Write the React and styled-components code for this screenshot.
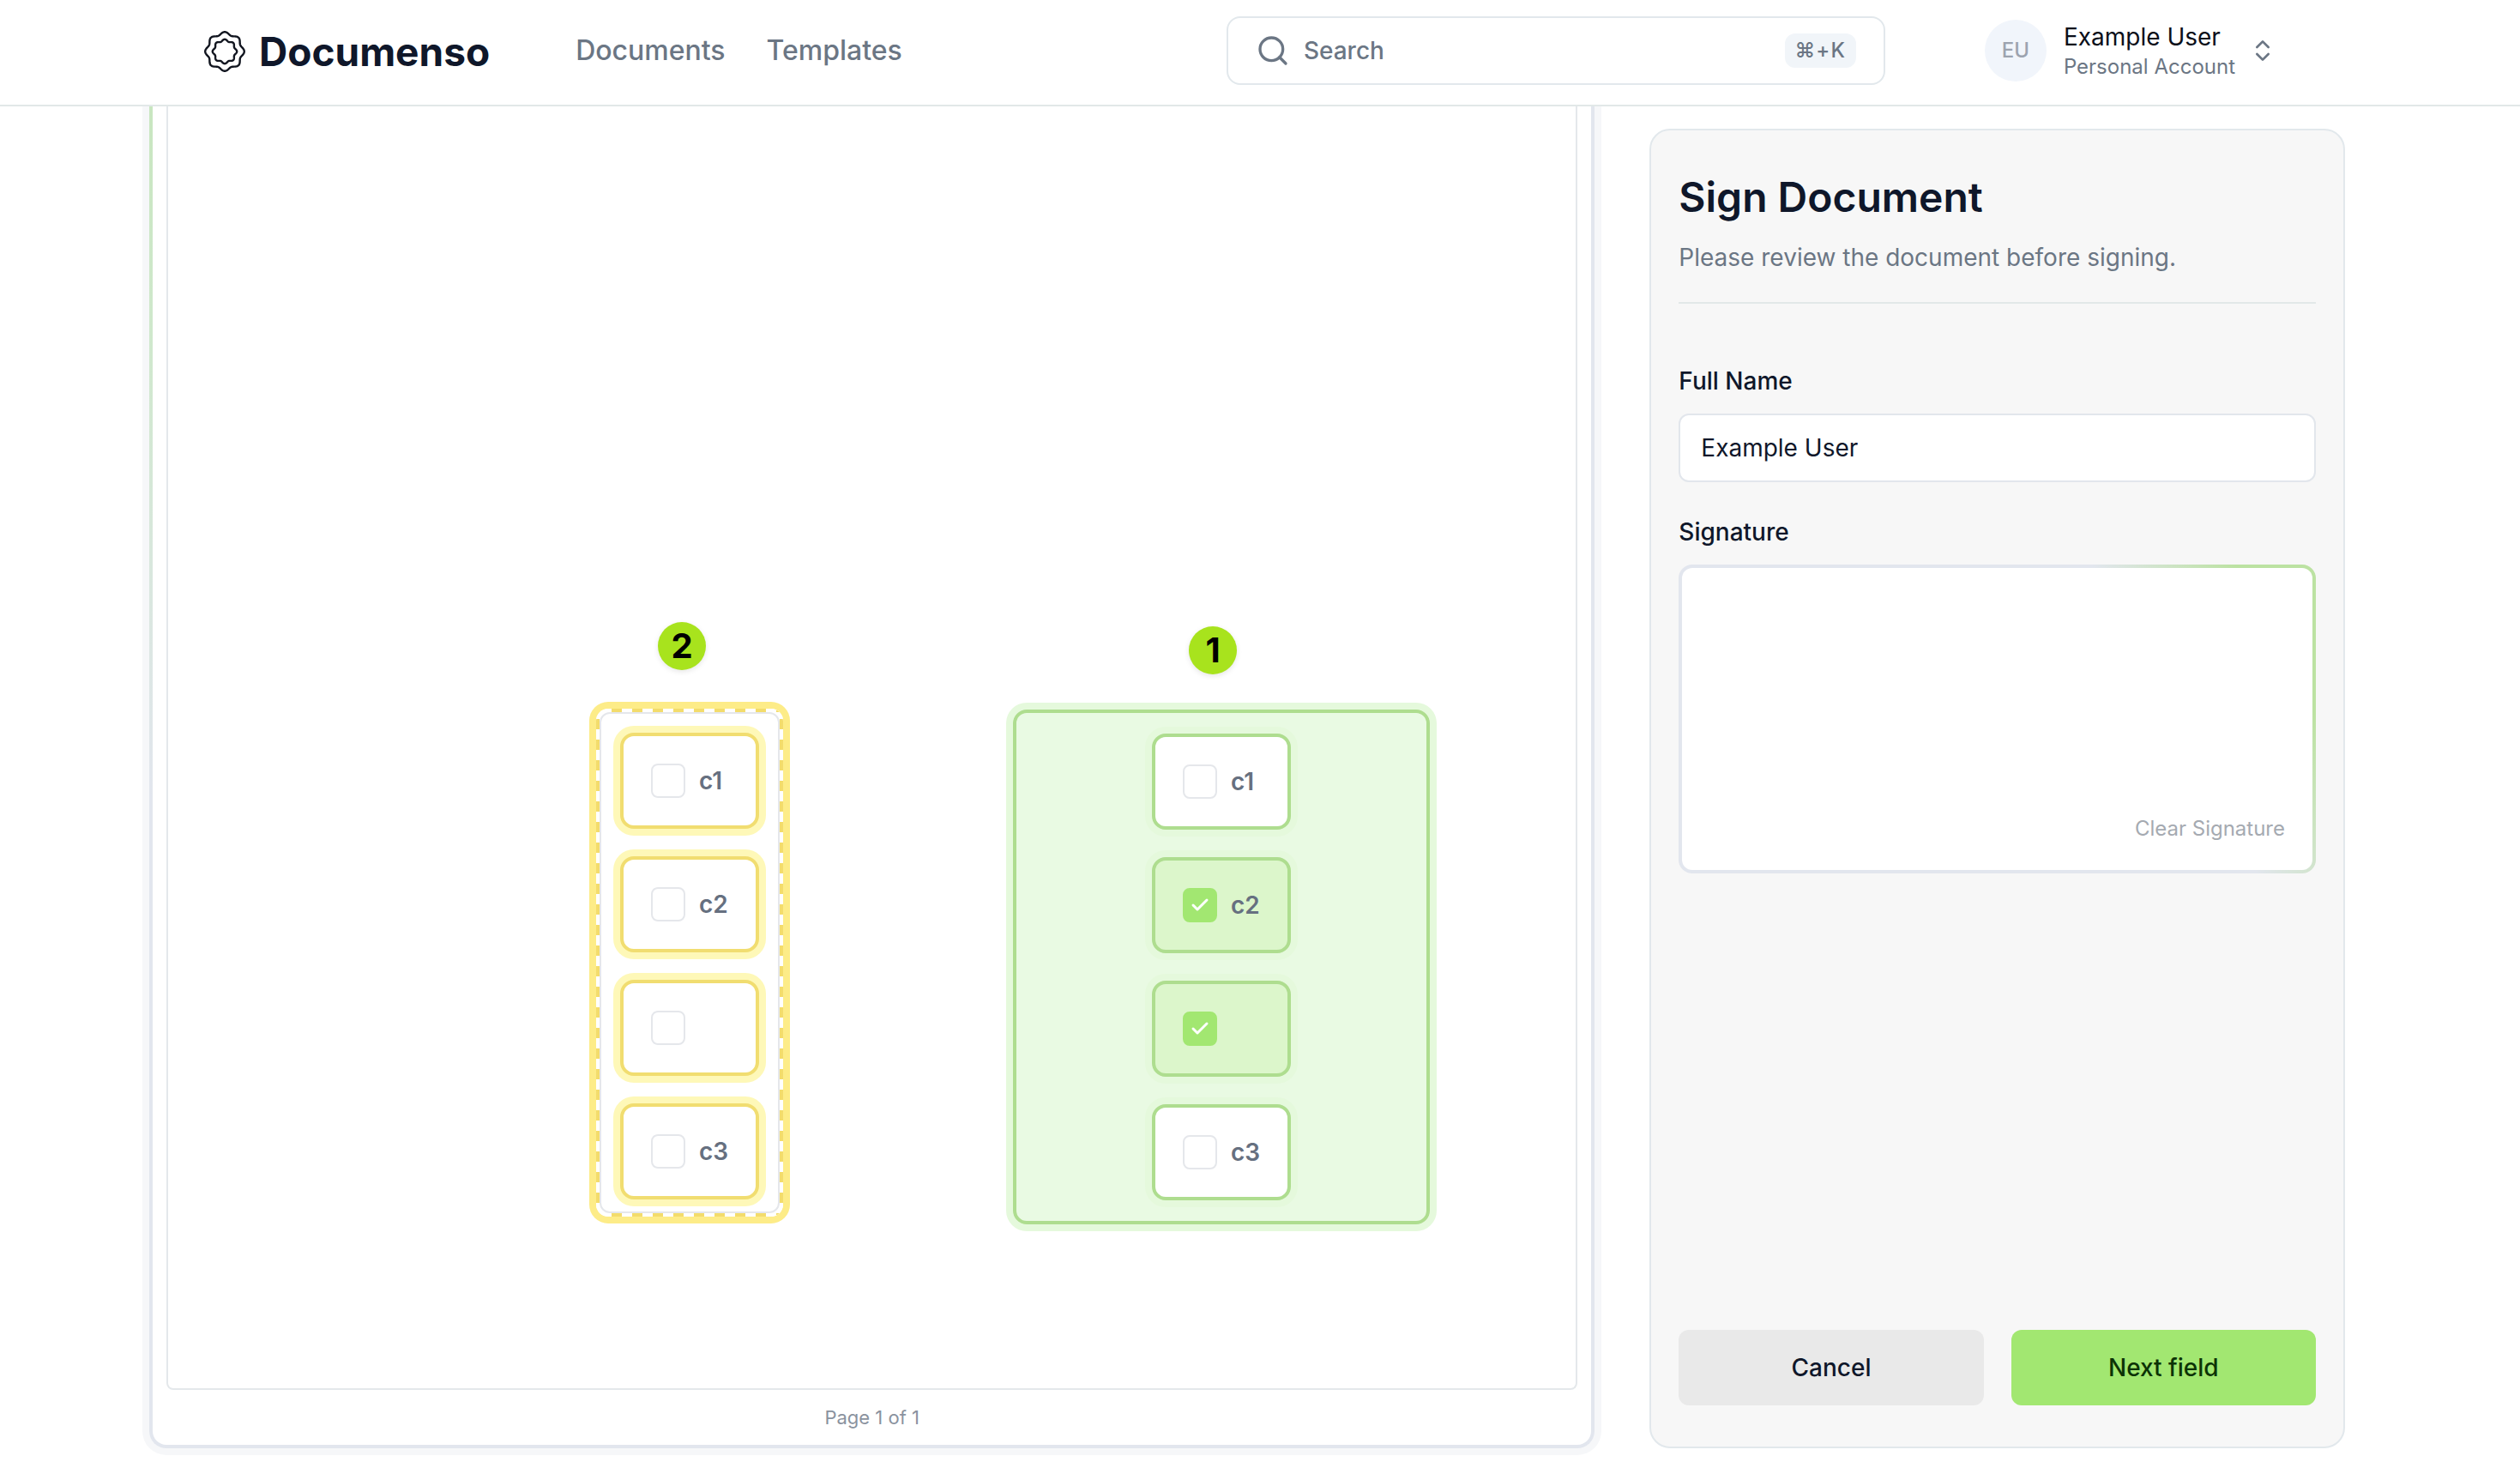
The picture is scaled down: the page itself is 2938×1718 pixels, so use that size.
import React from "react";
import styled, { createGlobalStyle } from "styled-components";
import { Check, ChevronsUpDown, Search } from "lucide-react";

const GlobalStyle = createGlobalStyle`
  *, *::before, *::after { box-sizing: border-box; }
  body {
    margin: 0;
    background: #fff;
    color: #0f172a;
    font-family: Inter, "Liberation Sans", sans-serif;
    font-size: 28px;
  }
  button, input { font: inherit; color: inherit; }
  button { cursor: pointer; }
  h1, p { margin: 0; }
`;

const Shell = styled.div`
  min-height: 100vh;
  display: flex;
  flex-direction: column;
`;

const Header = styled.header`
  position: sticky;
  top: 0;
  z-index: 10;
  height: 124px;
  padding: 0 30px 4px 0;
  background: #fff;
  border-bottom: 2px solid #e2e8e8;
`;

const HeaderInner = styled.div`
  max-width: 2560px;
  height: 100%;
  margin: 0 auto;
  padding: 0 64px;
  display: flex;
  align-items: center;
`;

const Brand = styled.a`
  display: flex;
  align-items: center;
  gap: 16px;
  padding-top: 2px;
  color: #0f172a;
  font-size: 46px;
  font-weight: 700;
  line-height: 48px;
  text-decoration: none;
`;

const Nav = styled.nav`
  flex: 1;
  display: flex;
  gap: 48px;
  margin-left: 100px;
`;

const NavLink = styled.a`
  color: #6b7684;
  font-size: 32px;
  font-weight: 500;
  line-height: 40px;
  text-decoration: none;
`;

const SearchButton = styled.button`
  width: 768px;
  height: 80px;
  padding: 0 32px;
  display: flex;
  align-items: center;
  gap: 16px;
  background: #fff;
  border: 2px solid #e2e8ec;
  border-radius: 16px;
  color: #6b7684;
  font-weight: 500;
`;

const Shortcut = styled.kbd`
  height: 40px;
  margin-left: auto;
  padding: 0 12px;
  border-radius: 12px;
  background: #f1f5f9;
  font-family: inherit;
  font-size: 24px;
  line-height: 40px;
  letter-spacing: 1px;
`;

const AccountButton = styled.button`
  margin-left: 100px;
  padding: 0 16px;
  display: flex;
  align-items: center;
  gap: 16px;
  background: none;
  border: 0;
  color: #6b7684;
  text-align: left;
`;

const Avatar = styled.span`
  width: 72px;
  height: 72px;
  border-radius: 50%;
  background: #f1f5fb;
  color: #9ca3af;
  font-size: 24px;
  font-weight: 500;
  line-height: 72px;
  text-align: center;
`;

const AccountText = styled.span`
  display: flex;
  flex-direction: column;
  padding: 2px 0 0 4px;
`;

const AccountName = styled.span`
  color: #0b0f1a;
  line-height: 36px;
`;

const AccountKind = styled.span`
  font-size: 24px;
  line-height: 34px;
`;

const Main = styled.main`
  flex: 1;
  display: grid;
  padding: 0 30px 30px 0;
`;

const Columns = styled.div`
  width: 100%;
  max-width: 2560px;
  margin: 0 auto;
  display: grid;
  grid-template-columns: repeat(12, minmax(0, 1fr));
  gap: 64px;
`;

const DocumentCard = styled.section`
  grid-column: span 8;
  display: flex;
  flex-direction: column;
  padding: 0 16px;
  border: 4px solid transparent;
  border-top: 0;
  border-radius: 0 0 20px 20px;
  background:
    linear-gradient(#fff, #fff) padding-box,
    linear-gradient(120deg, #c8e6c0 0%, #cfe8cc 6%, #e2e6ee 18%) border-box;
  box-shadow: 0 0 0 8px #f6f7f9;
`;

const Sheet = styled.div`
  position: relative;
  flex: 1;
  border: 2px solid #e4e8eb;
  border-top: 0;
  border-radius: 0 0 8px 8px;
`;

const PageCount = styled.p`
  color: #8a929e;
  font-size: 22px;
  line-height: 64px;
  text-align: center;
`;

const Marker = styled.span`
  position: absolute;
  left: ${(p) => p.$x}px;
  top: ${(p) => p.$y}px;
  width: 56px;
  height: 56px;
  border-radius: 50%;
  background: #a8e31d;
  box-shadow: 0 2px 6px rgba(0, 0, 0, 0.1);
  color: #000;
  font-size: 40px;
  font-weight: 700;
  line-height: 56px;
  text-align: center;
`;

const fieldTones = {
  pending: { border: "#f1dd70", ring: "#fef8b8" },
  active: { border: "#aedd8f", ring: "#e5f9dc" },
};

const Field = styled.fieldset`
  position: absolute;
  left: ${(p) => p.$x}px;
  top: ${(p) => p.$y}px;
  margin: 0;
  min-width: 0;
`;

const dash = (angle) =>
  `repeating-linear-gradient(${angle}, #f3dc6c 0 12px, #fff 12px 24px)`;

const PendingField = styled(Field)`
  padding: 4px;
  border: 0;
  border-radius: 14px;
  background:
    ${dash("90deg")} 18px 0 / 100% 4px no-repeat,
    ${dash("90deg")} 18px 100% / 100% 4px no-repeat,
    ${dash("180deg")} 0 12px / 4px 100% no-repeat,
    ${dash("180deg")} 100% 12px / 4px 100% no-repeat,
    #fff;
  box-shadow: 0 0 0 8px #fdec88;
`;

const PendingBody = styled.div`
  padding: 22px 22px 14px;
  border: 2px solid #e5e7eb;
  border-radius: 12px;
  background: #fff;
`;

const ActiveField = styled(Field)`
  width: 486px;
  padding: 24px;
  display: flex;
  justify-content: center;
  border: 4px solid ${fieldTones.active.border};
  border-radius: 16px;
  background: #e9fae3;
  box-shadow: 0 0 0 8px ${fieldTones.active.ring};
`;

const Options = styled.div`
  display: grid;
  gap: 32px;
`;

const Option = styled.label`
  width: 162px;
  height: 112px;
  padding: 0 32px;
  display: flex;
  align-items: center;
  gap: 16px;
  border: 4px solid ${(p) => fieldTones[p.$tone].border};
  border-radius: 16px;
  background: #fff;
  box-shadow: 0 0 0 8px ${(p) => fieldTones[p.$tone].ring};
  color: #667080;
  font-weight: 600;
  line-height: 40px;

  &:has(input:checked) { background: #dcf6cb; }
`;

const Tick = styled.span`
  display: grid;
  place-items: center;

  input, svg { grid-area: 1 / 1; }
  input {
    appearance: none;
    width: 40px;
    height: 40px;
    margin: 0;
    border: 2px solid #e5e7eb;
    border-radius: 8px;
    background: #fff;
  }
  svg { visibility: hidden; color: #fff; pointer-events: none; }
  input:checked { background: #a2e771; border-color: #a2e771; }
  input:checked + svg { visibility: visible; }
`;

const Panel = styled.form`
  grid-column: span 4;
  display: flex;
  flex-direction: column;
  margin-top: 26px;
  padding: 48px 32px;
  border: 2px solid #e2e8ec;
  border-radius: 24px;
  background: #f7f7f7;
`;

const Title = styled.h1`
  font-size: 48px;
  font-weight: 600;
  line-height: 60px;
`;

const Lead = styled.p`
  margin-top: 16px;
  color: #6b7684;
  line-height: 48px;
`;

const Divider = styled.hr`
  width: 100%;
  margin: 28px 0 32px;
  border: 0;
  border-top: 2px solid #e2e8e8;
`;

const FormRow = styled.div`
  display: grid;
  gap: 24px;
  margin-top: 44px;
`;

const Label = styled.label`
  font-weight: 500;
  line-height: 28px;
`;

const TextInput = styled.input`
  width: 100%;
  height: 80px;
  padding: 0 24px;
  border: 2px solid #e2e6ec;
  border-radius: 12px;
  background: #fff;
`;

const SignaturePad = styled.div`
  height: 360px;
  padding: 32px;
  display: flex;
  align-items: flex-end;
  justify-content: flex-end;
  border: 4px solid transparent;
  border-radius: 16px;
  background:
    linear-gradient(#fff, #fff) padding-box,
    linear-gradient(62deg, #e2e6ee 72%, #bce2a2 90%) border-box;
`;

const ClearButton = styled.button`
  padding: 0;
  border: 0;
  background: none;
  color: #a5aab1;
  font-size: 24px;
  line-height: 32px;
`;

const Actions = styled.div`
  display: grid;
  grid-template-columns: 1fr 1fr;
  gap: 32px;
  margin-top: auto;
`;

const ActionButton = styled.button`
  height: 88px;
  border: 0;
  border-radius: 12px;
  background: ${(p) => (p.$primary ? "#a2e771" : "#e9e9e9")};
  color: ${(p) => (p.$primary ? "#0c3306" : "#0f172a")};
  font-weight: 500;
`;

function wave(radius, depth) {
  const points = [];
  for (let i = 0; i < 160; i++) {
    const a = (i / 160) * Math.PI * 2;
    const r = radius + depth * Math.cos(8 * a);
    points.push(`${(24 + r * Math.sin(a)).toFixed(2)} ${(24 - r * Math.cos(a)).toFixed(2)}`);
  }
  return `M${points.join("L")}Z`;
}

function Seal() {
  return (
    <svg width="48" height="48" viewBox="0 0 48 48" fill="none" stroke="#121620" strokeWidth="2.4" strokeLinejoin="round" aria-hidden="true">
      <path d={wave(21.2, 1.6)} />
      <path d={wave(13.1, 1.1)} />
    </svg>
  );
}

function OptionList({ tone, items }) {
  return (
    <Options>
      {items.map((item, i) => (
        <Option key={i} $tone={tone}>
          <Tick>
            <input type="checkbox" defaultChecked={item.checked} aria-label={item.text ? undefined : "Option " + (i + 1)} />
            <Check size={24} strokeWidth={3} aria-hidden="true" />
          </Tick>
          {item.text}
        </Option>
      ))}
    </Options>
  );
}

const pendingItems = [{ text: "c1" }, { text: "c2" }, { text: "" }, { text: "c3" }];
const activeItems = [
  { text: "c1" },
  { text: "c2", checked: true },
  { text: "", checked: true },
  { text: "c3" },
];

export default function App() {
  return (
    <Shell>
      <GlobalStyle />
      <Header>
        <HeaderInner>
          <Brand href="#">
            <Seal />
            Documenso
          </Brand>
          <Nav>
            <NavLink href="#documents">Documents</NavLink>
            <NavLink href="#templates">Templates</NavLink>
          </Nav>
          <SearchButton type="button">
            <Search size={40} strokeWidth={2} aria-hidden="true" />
            Search
            <Shortcut>⌘+K</Shortcut>
          </SearchButton>
          <AccountButton type="button">
            <Avatar>EU</Avatar>
            <AccountText>
              <AccountName>Example User</AccountName>
              <AccountKind>Personal Account</AccountKind>
            </AccountText>
            <ChevronsUpDown size={32} aria-hidden="true" />
          </AccountButton>
        </HeaderInner>
      </Header>

      <Main>
        <Columns>
          <DocumentCard>
            <Sheet>
              <Marker $x={571} $y={601}>2</Marker>
              <PendingField $x={499} $y={702}>
                <PendingBody>
                  <OptionList tone="pending" items={pendingItems} />
                </PendingBody>
              </PendingField>
              <Marker $x={1190} $y={606}>1</Marker>
              <ActiveField $x={985} $y={703}>
                <OptionList tone="active" items={activeItems} />
              </ActiveField>
            </Sheet>
            <PageCount>Page 1 of 1</PageCount>
          </DocumentCard>

          <Panel onSubmit={(e) => e.preventDefault()}>
            <Title>Sign Document</Title>
            <Lead>Please review the document before signing.</Lead>
            <Divider />
            <FormRow>
              <Label htmlFor="full-name">Full Name</Label>
              <TextInput id="full-name" type="text" defaultValue="Example User" />
            </FormRow>
            <FormRow>
              <Label as="span" id="signature-label">Signature</Label>
              <SignaturePad role="group" aria-labelledby="signature-label">
                <ClearButton type="button">Clear Signature</ClearButton>
              </SignaturePad>
            </FormRow>
            <Actions>
              <ActionButton type="button">Cancel</ActionButton>
              <ActionButton type="submit" $primary>Next field</ActionButton>
            </Actions>
          </Panel>
        </Columns>
      </Main>
    </Shell>
  );
}
